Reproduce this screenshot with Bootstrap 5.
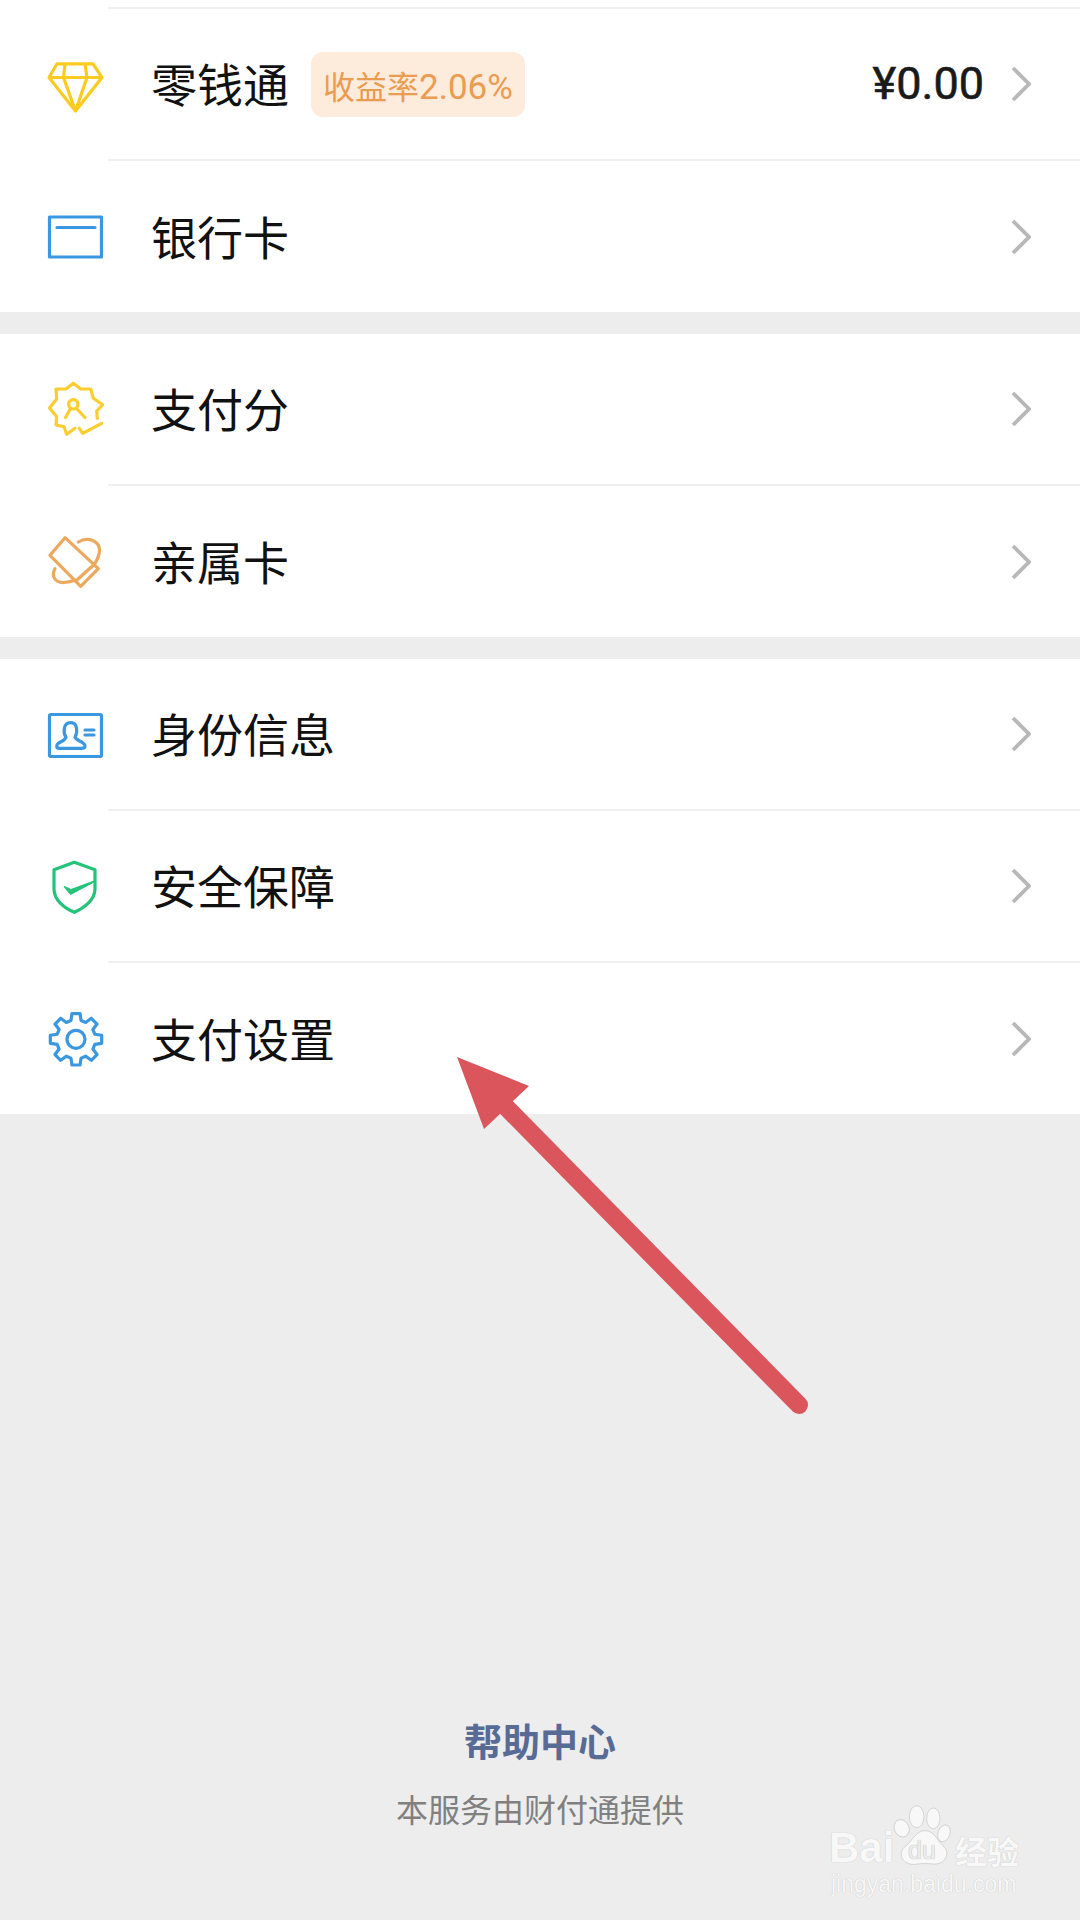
<!DOCTYPE html>
<html lang="zh-CN">
<head>
    <meta charset="UTF-8" />
    <meta name="viewport" content="width=device-width, initial-scale=1" />
    <title>支付设置</title>
    <link href="https://cdn.jsdelivr.net/npm/bootstrap@5.3.0/dist/css/bootstrap.min.css" rel="stylesheet" />
    <style>
        body { position: relative; height: 1920px; overflow: hidden; background: #ededed; font-family: "Noto Sans CJK SC", sans-serif; color: #111; }
        .pay-top { height: 9px; background: #fff; }
        .pay-top div { height: 9px; margin-left: 108px; border-bottom: 2px solid #efefef; }
        .pay-group { background: #fff; }
        .pay-group + .pay-group { margin-top: 22px; }
        .pay-row { height: 152px; background: #fff; color: #111; }
        .pay-row:last-child { height: 151px; }
        .pay-icon { flex: none; width: 68px; height: 70px; margin-left: 40px; fill: none; stroke-width: 3.2; stroke-linecap: round; stroke-linejoin: round; }
        .pay-body { height: 100%; padding: 0 49px 0 43px; font-size: 46px; line-height: 1; }
        .pay-row:not(:last-child) .pay-body { border-bottom: 2px solid #efefef; }
        .pay-name { margin-bottom: 4px; }
        .pay-tag { margin-left: 22px; padding: 0 12px; height: 65px; line-height: 66px; border-radius: 12px; background: #fdebdc; color: #ea9c50; font-family: "Noto Sans CJK SC", sans-serif; font-size: 32px; }
        .pay-rate { font-family: Roboto, sans-serif; font-size: 35px; }
        .pay-money { font-family: Roboto, sans-serif; font-size: 45px; font-weight: 400; margin-right: 27px; margin-bottom: 2px; color: #1a1a1a; -webkit-text-stroke: .6px #1a1a1a; }
        .pay-arrow { flex: none; width: 20px; height: 36px; fill: none; stroke: #b8b8b8; stroke-width: 3.8; }
        .pay-foot { padding-top: 601px; }
        .pay-help { font-size: 38px; line-height: 50px; font-weight: 700; color: #576b95; }
        .pay-by { margin-top: 21px; font-size: 32px; line-height: 44px; color: #808080; }
        .pay-mark { position: absolute; left: 450px; top: 1050px; width: 360px; height: 370px; }
        .wm { position: absolute; left: 820px; top: 1800px; width: 210px; height: 100px; color: #f8f8f8; text-shadow: 0 0 1px #b5b5b5; }
        .wm-paw { position: absolute; left: 0; top: 0; }
        .wm-bai { position: absolute; left: 9px; top: 20px; font: 700 42px/56px "Liberation Sans", sans-serif; }
        .wm-du { position: absolute; left: 88px; top: 35px; font: 400 25px/30px "Liberation Sans", sans-serif; color: #ededed; text-shadow: 0 0 1px #999; }
        .wm-jy { position: absolute; left: 135px; top: 30px; font-size: 32px; line-height: 40px; font-weight: 700; }
        .wm-url { position: absolute; left: 11px; top: 69px; font: 400 23px/30px "Liberation Sans", sans-serif; white-space: nowrap; }
    </style>
</head>
<body>
<div class="pay-top"><div></div></div>

<div class="pay-group list-group rounded-0">
    <a class="pay-row list-group-item d-flex align-items-center p-0 border-0 rounded-0">
        <svg class="pay-icon" viewBox="0 0 68 70" stroke="#fbcc1f"><path d="M17 13.8H53L62 27.5L35.5 61L9 27.5ZM9 27.5H62M25 13.8L23.5 27.5L35.5 61L47 27.5L45 13.8" /></svg>
        <div class="pay-body d-flex align-items-center flex-grow-1">
            <span class="pay-name">零钱通</span><span class="pay-tag">收益率<span class="pay-rate">2.06%</span></span>
            <span class="pay-money ms-auto">¥0.00</span>
            <svg class="pay-arrow" viewBox="0 0 20 36"><path d="M2 2L18 18L2 34" /></svg>
        </div>
    </a>
    <a class="pay-row list-group-item d-flex align-items-center p-0 border-0 rounded-0">
        <svg class="pay-icon" viewBox="0 0 68 70" stroke="#3a97e0"><path d="M9.5 15H61.5V55H9.5ZM17 25.5H55" /></svg>
        <div class="pay-body d-flex align-items-center flex-grow-1">
            <span class="pay-name">银行卡</span>
            <svg class="pay-arrow ms-auto" viewBox="0 0 20 36"><path d="M2 2L18 18L2 34" /></svg>
        </div>
    </a>
</div>

<div class="pay-group list-group rounded-0">
    <a class="pay-row list-group-item d-flex align-items-center p-0 border-0 rounded-0">
        <svg class="pay-icon" viewBox="0 0 68 70" stroke="#fbcd2f"><path d="M57.3 43.3L56.7 36L62.7 29.7L53.3 23.3L50.7 14L40.7 14L33.3 8.3L26 14L16 14L16.7 24L9.5 33L16.7 41.7L16 50L24 51.7L26.7 59.3L35 53.3M39.3 53.3L42.7 58.3L61.7 48.3M30.5 33.5L25.5 42.5M36.5 33.5L45 42.5" /><circle cx="33.3" cy="29.3" r="4.7" /></svg>
        <div class="pay-body d-flex align-items-center flex-grow-1">
            <span class="pay-name">支付分</span>
            <svg class="pay-arrow ms-auto" viewBox="0 0 20 36"><path d="M2 2L18 18L2 34" /></svg>
        </div>
    </a>
    <a class="pay-row list-group-item d-flex align-items-center p-0 border-0 rounded-0">
        <svg class="pay-icon" viewBox="0 0 68 70" stroke="#eca95e"><path d="M25 10.7L58.3 41.7L40.7 59.3L10 28.3ZM53.3 38.3L36.7 53.3M38.3 15C48 9 60 14 59.5 24C59 30 56 35 53.5 38.5M15 41.7C11 49 15 56 24 55.5C28 55.3 32 54.5 35 53" /></svg>
        <div class="pay-body d-flex align-items-center flex-grow-1">
            <span class="pay-name">亲属卡</span>
            <svg class="pay-arrow ms-auto" viewBox="0 0 20 36"><path d="M2 2L18 18L2 34" /></svg>
        </div>
    </a>
</div>

<div class="pay-group list-group rounded-0">
    <a class="pay-row list-group-item d-flex align-items-center p-0 border-0 rounded-0">
        <svg class="pay-icon" viewBox="0 0 68 70" stroke="#3a97e0"><rect x="9.5" y="14.5" width="52" height="42" rx="1.5" /><path d="M26 37.3C23.3 33.3 22.7 22.7 30.7 22.7C38.3 22.7 37.3 33.3 35 37.3C36 40.7 45 41.7 45 46C45 48.3 42.7 48.3 41.7 48.3L19.3 48.3C16 48.3 16 45 18.3 43.3C20.7 41.7 25 40.7 26 37.3ZM45 30H54M45 35H54" /></svg>
        <div class="pay-body d-flex align-items-center flex-grow-1">
            <span class="pay-name">身份信息</span>
            <svg class="pay-arrow ms-auto" viewBox="0 0 20 36"><path d="M2 2L18 18L2 34" /></svg>
        </div>
    </a>
    <a class="pay-row list-group-item d-flex align-items-center p-0 border-0 rounded-0">
        <svg class="pay-icon" viewBox="0 0 68 70" stroke="#25c27a"><path d="M34.3 10.3L55 17.7V37C55 48 44 56 34.3 60.3C24 56 14 48 14 37V17.7Z" /><path d="M24.5 34.5L31 37.5L54 29L54 30L30.5 42.5L25 36Z" fill="#25c27a" stroke-width="1" /></svg>
        <div class="pay-body d-flex align-items-center flex-grow-1">
            <span class="pay-name">安全保障</span>
            <svg class="pay-arrow ms-auto" viewBox="0 0 20 36"><path d="M2 2L18 18L2 34" /></svg>
        </div>
    </a>
    <a class="pay-row list-group-item d-flex align-items-center p-0 border-0 rounded-0">
        <svg class="pay-icon" viewBox="0 0 68 70" stroke="#3a97e0"><g transform="translate(36 35.3)"><polygon points="-5.05,-18.84 -4.07,-25.68 4.07,-25.68 5.05,-18.84 9.75,-16.89 15.28,-21.03 21.03,-15.28 16.89,-9.75 18.84,-5.05 25.68,-4.07 25.68,4.07 18.84,5.05 16.89,9.75 21.03,15.28 15.28,21.03 9.75,16.89 5.05,18.84 4.07,25.68 -4.07,25.68 -5.05,18.84 -9.75,16.89 -15.28,21.03 -21.03,15.28 -16.89,9.75 -18.84,5.05 -25.68,4.07 -25.68,-4.07 -18.84,-5.05 -16.89,-9.75 -21.03,-15.28 -15.28,-21.03 -9.75,-16.89" /><circle r="9" /></g></svg>
        <div class="pay-body d-flex align-items-center flex-grow-1">
            <span class="pay-name">支付设置</span>
            <svg class="pay-arrow ms-auto" viewBox="0 0 20 36"><path d="M2 2L18 18L2 34" /></svg>
        </div>
    </a>
</div>

<div class="pay-foot text-center">
    <div class="pay-help">帮助中心</div>
    <div class="pay-by">本服务由财付通提供</div>
</div>

<!-- red arrow drawn on top of the screenshot -->
<svg class="pay-mark" viewBox="450 1050 360 370">
    <path d="M506 1107L799 1405" stroke="#da565c" stroke-width="18" stroke-linecap="round" />
    <polygon points="457,1057 529,1086 513,1101 500,1114 484,1129" fill="#da565c" />
</svg>

<!-- watermark -->
<div class="wm">
    <span class="wm-bai">Bai</span>
    <svg class="wm-paw" width="210" height="100" viewBox="0 0 630 300" fill="#f8f8f8" stroke="#c4c4c4" stroke-width="2">
        <ellipse cx="245" cy="85" rx="22" ry="27" transform="rotate(-25 245 85)" />
        <ellipse cx="290" cy="50" rx="22" ry="33" />
        <ellipse cx="340" cy="55" rx="20" ry="31" />
        <ellipse cx="372" cy="100" rx="18" ry="26" transform="rotate(20 372 100)" />
        <path d="M315 92C345 92 352 125 372 140C392 160 375 195 340 192C320 190 305 190 285 193C250 196 232 165 252 142C278 125 285 92 315 92Z" />
    </svg>
    <span class="wm-du">du</span>
    <span class="wm-jy">经验</span>
    <span class="wm-url">jingyan.baidu.com</span>
</div>

<script src="https://cdn.jsdelivr.net/npm/bootstrap@5.3.0/dist/js/bootstrap.bundle.min.js"></script>
</body>
</html>
